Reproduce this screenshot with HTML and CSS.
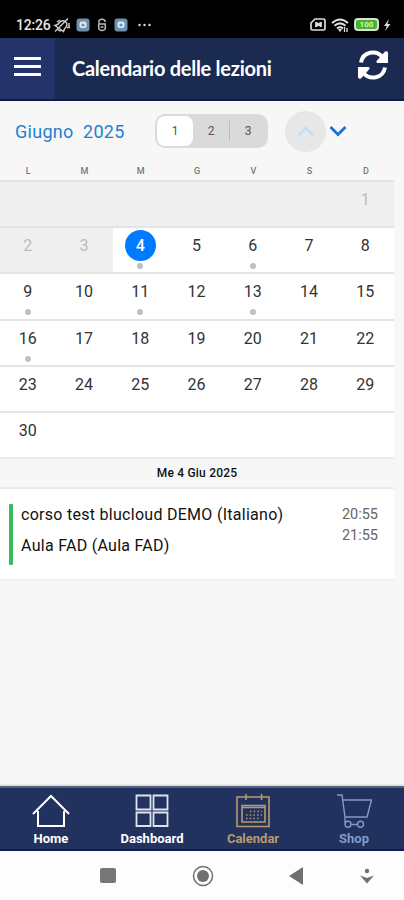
FILE: index.html
```html
<!DOCTYPE html>
<html lang="it">
<head>
    <meta charset="UTF-8">
    <meta name="viewport" content="width=device-width, initial-scale=1.0">
    <title>Calendario delle lezioni</title>
    <link rel="stylesheet" href="styles.css">
</head>
<body>
    <div class="status-bar">
        <span class="clock">12:26</span>
        <svg class="bell" width="18" height="16" viewBox="0 0 18 16" fill="none" stroke="#c8c8c8" stroke-width="1.5">
            <path d="M2 8.500Q5 8 6.500 5.500Q9 2.500 12.500 4.500Q15 7 13 10Q11 12 10.500 14.500ZM2 14.500L15 1.500M5 12.500Q6 14.500 8 13.500M14 10.500h3M16 6v4M4 5l3-2"/>
        </svg>
        <svg class="app" width="14" height="14" viewBox="0 0 14 14">
            <rect x="0.500" y="0.500" width="13" height="13" rx="3" fill="#6d91ae"/>
            <rect x="3.500" y="3.500" width="7" height="6.500" rx="2" fill="#dce9f1"/>
            <circle cx="7" cy="7" r="1.600" fill="#6d91ae"/>
        </svg>
        <svg class="lock" width="10" height="14" viewBox="0 0 10 14" fill="none" stroke="#bbb" stroke-width="1.500">
            <path d="M8 4V2.500Q5 .2 2 2.500V6H8.300V10Q8 12.500 5 12.500T1.700 10V6M3.500 9h3"/>
        </svg>
        <svg class="app" width="14" height="14" viewBox="0 0 14 14">
            <rect x="0.500" y="0.500" width="13" height="13" rx="3" fill="#6d91ae"/>
            <rect x="3.500" y="3.500" width="7" height="6.500" rx="2" fill="#dce9f1"/>
            <circle cx="7" cy="7" r="1.600" fill="#6d91ae"/>
        </svg>
        <svg class="more" width="16" height="4" viewBox="0 0 16 4" fill="#ddd">
            <circle cx="2.500" cy="2" r="1.200"/><circle cx="7.500" cy="2" r="1.200"/><circle cx="12.500" cy="2" r="1.200"/>
        </svg>
        <svg class="sim" width="16" height="13" viewBox="0 0 16 13" fill="none" stroke="#ddd" stroke-width="1.700">
            <path d="M5 1H13.500Q15 1 15 2.500V10.500Q15 12 13.500 12H2.500Q1 12 1 10.500V5ZM6 4.500l5 4M11 4.500l-5 4M6 4v5M11 4v5"/>
        </svg>
        <svg class="wifi" width="18" height="14" viewBox="0 0 18 14" fill="none" stroke="#ddd" stroke-width="2">
            <path d="M1 5Q9-2 17 5M3.500 7.800Q9 3 14.500 7.800M6 10.500Q9 7.500 12 10.500"/>
            <path d="M8 11.500L9 13l1-1.500zM13.500 9v5M16 10v4" stroke-width="1.300"/>
        </svg>
        <div class="battery">100</div>
        <svg class="bolt" width="8" height="12" viewBox="0 0 8 12" fill="#ddd"><path d="M6 0L1 7H3.800L2 12L7.500 5H4.500Z"/></svg>
    </div>

    <header class="header">
        <div class="menu-btn"><i></i><i></i><i></i></div>
        <h1 class="title">Calendario delle lezioni</h1>
        <svg class="refresh" width="32" height="30" viewBox="0 0 32 30" fill="none" stroke="#fff" stroke-width="4">
            <path d="M4 12.500C6 1.500 19-.5 25.500 7M28 17.500C26 28.500 13 30.500 6.500 23"/>
            <path d="M28 1.500Q31 .5 31 3V13H20.500Q18.500 12 20 10.500ZM4 28.500Q1 29.500 1 27V17H11.500Q13.500 18 12 19.500Z" fill="#fff" stroke="none"/>
        </svg>
    </header>

    <main class="content">
        <div class="toolbar">
            <div class="month">Giugno&nbsp; 2025</div>
            <div class="segment">
                <span class="active">1</span>
                <span>2</span>
                <span>3</span>
            </div>
            <div class="arrow-up">
                <svg width="18" height="12" viewBox="0 0 18 12" fill="none" stroke="#c3dcf8" stroke-width="2.500"><path d="M2 10L9 3l7 7"/></svg>
            </div>
            <svg class="arrow-down" width="18" height="12" viewBox="0 0 18 12" fill="none" stroke="#1673d6" stroke-width="2.700"><path d="M1.500 2L9 9.500L16.500 2"/></svg>
        </div>

        <div class="weekdays">
            <span>L</span><span>M</span><span>M</span><span>G</span><span>V</span><span>S</span><span>D</span>
        </div>
        <div class="days" id="days"></div>

        <div class="list-header">Me 4 Giu 2025</div>
        <div class="event">
            <div class="event-bar"></div>
            <div class="event-text">
                <p class="course">corso test blucloud DEMO (Italiano)</p>
                <p class="room">Aula FAD (Aula FAD)</p>
            </div>
            <div class="event-time">
                <div>20:55</div>
                <div>21:55</div>
            </div>
        </div>
    </main>

    <nav class="tabs">
        <div class="tab">
            <svg width="38" height="34" viewBox="0 0 38 34" fill="none" stroke="#fff" stroke-width="2">
                <path d="M1 20L19 2l18 18M6 17V32H32V17"/>
            </svg>
            <span>Home</span>
        </div>
        <div class="tab">
            <svg width="38" height="34" viewBox="0 0 38 34" fill="none" stroke="#dfe3ef" stroke-width="1.800">
                <path d="M3.500 1.500H17.500V15.500H3.500ZM20.500 1.500H34.500V15.500H20.500ZM3.500 18.500H17.500V32H3.500ZM20.500 18.500H34.500V32H20.500Z"/>
            </svg>
            <span>Dashboard</span>
        </div>
        <div class="tab gold">
            <svg width="38" height="34" viewBox="0 0 38 34" fill="none" stroke="currentColor" stroke-width="1.600">
                <path d="M3 3H35V32.500H3ZM8 11.500H31V28H8ZM8 13.500H31M12 0V6M27.500 0V6"/>
                <path d="M16 17.500H28M12 21H28M12 24.500H25" stroke-dasharray="1.500 2.200"/>
            </svg>
            <span>Calendar</span>
        </div>
        <div class="tab blue">
            <svg width="38" height="34" viewBox="0 0 38 34" fill="none" stroke="currentColor" stroke-width="1.400">
                <path d="M2 1H7L10 23H32L36.500 6H8M10 23V29M16 30.500H22"/>
                <circle cx="13" cy="30.300" r="3"/><circle cx="25.500" cy="30.300" r="3"/>
            </svg>
            <span>Shop</span>
        </div>
    </nav>

    <div class="system-nav">
        <div class="nav-square"></div>
        <svg class="nav-circle" width="22" height="22" viewBox="0 0 22 22">
            <circle cx="11" cy="11" r="9.500" fill="none" stroke="#707070" stroke-width="1.500"/><circle cx="11" cy="11" r="6" fill="#707070"/>
        </svg>
        <svg class="nav-back" width="14" height="18" viewBox="0 0 14 18" fill="#707070"><path d="M0 9L14 0V18Z"/></svg>
        <svg class="nav-down" width="14" height="16" viewBox="0 0 14 16" fill="#707070"><circle cx="7" cy="3" r="2.200"/><path d="M0 7.500L7 10l7-2.500L7 15.500Z"/></svg>
    </div>

    <script>
        const days = document.getElementById('days');
        const lessonDays = [4, 6, 9, 11, 13, 16];
        let content = '';

        // June 2025 starts on a Sunday
        for (let i = -5; i <= 36; i++) {
            const day = i >= 1 && i <= 30 ? i : '';
            const classes = ['day'];
            if (i < 4) classes.push('past');
            if (i === 4) classes.push('selected');
            if (lessonDays.includes(i)) classes.push('marked');
            content += `<div class="${classes.join(' ')}"><span>${day}</span></div>`;
        }

        days.innerHTML = content;
    </script>
</body>
</html>
```
FILE: styles.css
```css
* {
    box-sizing: border-box;
}
body {
    font-family: Roboto, 'Liberation Sans', sans-serif;
    background-color: #f7f7f7;
    margin: 0;
    height: 900px;
    display: flex;
    flex-direction: column;
    overflow: hidden;
}
svg {
    display: block;
    flex: none;
}
.status-bar {
    height: 38px;
    flex: none;
    background-color: #000;
    display: flex;
    align-items: center;
    padding: 11px 13px 0 16px;
}
.clock {
    color: #e6e6e6;
    font-size: 14px;
    font-weight: 500;
    letter-spacing: -0.2px;
    width: 37px;
    white-space: nowrap;
}
.app {
    margin-left: 5px;
}
.lock {
    margin: 0 2px 0 7px;
}
.more {
    margin-left: 9px;
}
.sim {
    margin-left: auto;
}
.wifi {
    margin-left: 5px;
}
.battery {
    width: 25px;
    height: 13px;
    margin: 0 4px 0 5px;
    border: 2px solid #ddd;
    border-radius: 4px;
    background-color: #46b52c;
    color: #d5f5c5;
    font-size: 8px;
    line-height: 9px;
    font-weight: bold;
    text-align: center;
}
.header {
    height: 63px;
    flex: none;
    display: flex;
    align-items: center;
    background-color: #1b2a50;
    border-bottom: 2px solid #11194c;
}
.menu-btn {
    width: 55px;
    height: 100%;
    background-color: #24346a;
    padding: 19px 14px;
}
.menu-btn i {
    display: block;
    height: 3px;
    margin-bottom: 5px;
    background-color: #fff;
}
.title {
    margin: -2px 0 0 17px;
    font-family: Lato, sans-serif;
    font-size: 20px;
    font-weight: bold;
    letter-spacing: -0.27px;
    color: #fff;
    white-space: nowrap;
}
.refresh {
    margin: 0 15px 7px auto;
}
.content {
    flex: 1;
}
.toolbar {
    height: 61px;
    display: flex;
    align-items: center;
    padding: 0 0 1px 15px;
}
.month {
    width: 140px;
    font-size: 18px;
    letter-spacing: 0.28px;
    color: #1c82d0;
    white-space: nowrap;
}
.segment {
    width: 113px;
    height: 34px;
    padding: 2px;
    border-radius: 10px;
    background-color: #dadada;
    display: flex;
}
.segment span {
    flex: 1;
    font-size: 12px;
    line-height: 31px;
    text-align: center;
    color: #555;
}
.segment .active {
    background-color: #fff;
    border-radius: 8px;
}
.segment span:last-child {
    border-left: 1px solid #bcbcbc;
    height: 20px;
    line-height: 20px;
    margin-top: 5px;
}
.arrow-up {
    width: 41px;
    height: 41px;
    margin-left: 17px;
    border-radius: 50%;
    background-color: #e7e7e7;
    display: flex;
    align-items: center;
    justify-content: center;
}
.arrow-down {
    margin-left: 3px;
}
.weekdays {
    width: 394px;
    height: 18px;
    display: grid;
    grid-template-columns: repeat(7, 1fr);
    font-size: 9px;
    font-weight: 500;
    line-height: 19px;
    text-align: center;
    color: #777;
}
.days {
    width: 394px;
    display: grid;
    grid-template-columns: repeat(7, 1fr);
    grid-auto-rows: 46.2px;
}
.day {
    background-color: #fff;
    border-top: 2px solid #e4e4e4;
    display: flex;
    flex-direction: column;
    align-items: center;
}
.day span {
    width: 31px;
    height: 31px;
    margin: 2px 1px 0 0;
    border-radius: 50%;
    font-size: 16px;
    line-height: 31px;
    text-align: center;
    color: #333;
}
.past {
    background-color: #efefef;
}
.day.past span {
    color: #bbb;
}
.day.selected span {
    background-color: #007aff;
    color: #fff;
    font-weight: 500;
}
.marked::after {
    content: '';
    width: 6px;
    height: 6px;
    margin: 2px 1px 0 0;
    border-radius: 50%;
    background-color: #c0c0c0;
}
.list-header {
    width: 394px;
    height: 32px;
    border-top: 2px solid #ebebeb;
    border-bottom: 2px solid #ebebeb;
    font-size: 12px;
    font-weight: 500;
    letter-spacing: 0.2px;
    line-height: 28px;
    text-align: center;
    color: #111;
}
.event {
    width: 394px;
    height: 92px;
    background-color: #fff;
    border-bottom: 2px solid #efefef;
    display: flex;
    padding: 15px 16px 0 9px;
}
.event-bar {
    width: 4px;
    height: 61px;
    border-radius: 1px;
    background-color: #39bb5d;
}
.event-text {
    flex: 1;
    padding: 1px 0 0 8px;
}
.event-text p {
    margin: 0;
    font-size: 16px;
    letter-spacing: 0.28px;
    line-height: 20px;
    color: #111;
    white-space: nowrap;
}
.event-text .room {
    margin-top: 11px;
}
.event-time {
    font-size: 14.5px;
    line-height: 21px;
    color: #666;
}
.tabs {
    height: 65px;
    flex: none;
    display: flex;
    background-color: #21325f;
    border-top: 2px solid #56617f;
    border-bottom: 2px solid #111a58;
    box-shadow: 0 -1px 2px #ccc;
}
.tab {
    flex: 1;
    display: flex;
    flex-direction: column;
    align-items: center;
    padding: 6px 0 0 1px;
    color: #fff;
    font-size: 13px;
    font-weight: bold;
    line-height: 21px;
}
.gold {
    color: #b99a6b;
}
.blue {
    color: #8499c5;
}
.system-nav {
    height: 49px;
    flex: none;
    background-color: #fdfdfd;
    display: flex;
    align-items: center;
    padding: 0 30px 0 100px;
}
.nav-square {
    width: 16px;
    height: 15px;
    border-radius: 2px;
    background-color: #777;
}
.nav-circle {
    margin-left: 76px;
}
.nav-back {
    margin-left: 75px;
}
.nav-down {
    margin-left: auto;
}
```
